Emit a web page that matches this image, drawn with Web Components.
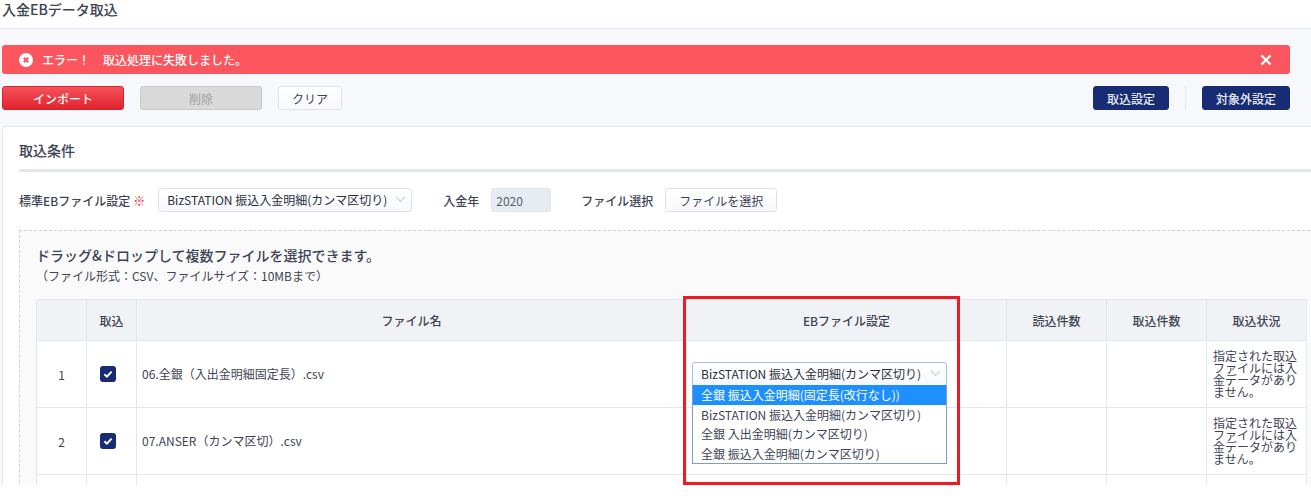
<!DOCTYPE html>
<html lang="ja">
<head>
<meta charset="utf-8">
<title>入金EBデータ取込</title>
<style>
  html, body { margin: 0; background: #fff; }
  body { font-family: "Noto Sans CJK JP", "Noto Sans", sans-serif; font-size: 12px; color: #3d4454; }
</style>
</head>
<body>
<eb-page>
  <eb-header slot="header">入金EBデータ取込</eb-header>
  <eb-alert slot="alert"><b>エラー！</b><b>取込処理に失敗しました。</b></eb-alert>
  <eb-toolbar slot="toolbar">
    <eb-button variant="danger" width="122">インポート</eb-button>
    <eb-button variant="disabled" width="122">削除</eb-button>
    <eb-button width="64">クリア</eb-button>
    <eb-button slot="right" variant="navy" width="76">取込設定</eb-button>
    <eb-button slot="right2" variant="navy" width="88">対象外設定</eb-button>
  </eb-toolbar>
  <eb-card slot="card" heading="取込条件">
    <eb-form-row></eb-form-row>
    <eb-dropzone>
      <eb-file-table></eb-file-table>
    </eb-dropzone>
  </eb-card>
</eb-page>

<script>
const CHEVRON = `<svg width="11" height="7" viewBox="0 0 11 7" fill="none"><path d="M1 1l4.5 4.5L10 1" stroke="#cdd3dd" stroke-width="1.2"/></svg>`;

class EbPage extends HTMLElement {
  constructor() {
    super();
    this.attachShadow({ mode: 'open' });
    this.shadowRoot.innerHTML = /*html*/ `
      <style>
        :host { display: block; position: relative; height: 485px; overflow: hidden; background: #f7f8fb; }
        main { display: flex; flex-direction: column; padding: 16px 0 0 2px; }
        ::slotted([slot="alert"]), ::slotted([slot="toolbar"]) { margin-right: 21px; }
        ::slotted([slot="toolbar"]) { margin-top: 12px; }
        ::slotted([slot="card"]) { margin-top: 16px; margin-right: -20px; }
        /* marca roja sobre la columna de la tabla */
        .mark { position: absolute; left: 683px; top: 296px; width: 271px; height: 183px; border: 3px solid #ed1c24; pointer-events: none; }
      </style>
      <slot name="header"></slot>
      <main>
        <slot name="alert"></slot>
        <slot name="toolbar"></slot>
        <slot name="card"></slot>
      </main>
      <div class="mark"></div>
    `;
  }
}

class EbHeader extends HTMLElement {
  constructor() {
    super();
    this.attachShadow({ mode: 'open' });
    this.shadowRoot.innerHTML = /*html*/ `
      <style>
        :host { display: flex; align-items: center; height: 18px; padding: 0 0 10px 2px; background: #fff; border-bottom: 1px solid #e1e7f1; font-size: 14px; font-weight: 500; color: #3d4454; }
      </style>
      <slot></slot>
    `;
  }
}

class EbAlert extends HTMLElement {
  constructor() {
    super();
    this.attachShadow({ mode: 'open' });
    this.shadowRoot.innerHTML = /*html*/ `
      <style>
        :host { display: flex; align-items: center; height: 29px; padding: 0 18px 0 17px; background: #fb555e; border-radius: 3px; color: #fff; font-size: 12px; }
        svg { flex: none; }
        .msg { display: flex; gap: 13px; margin-left: 9px; flex: 1; }
        ::slotted(b) { font-weight: 500; }
      </style>
      <svg width="14" height="14" viewBox="0 0 14 14"><circle cx="7" cy="7" r="7" fill="#fff"/><path d="M4.8 4.8l4.4 4.4M9.2 4.8L4.8 9.2" stroke="#fb555e" stroke-width="2"/></svg>
      <div class="msg"><slot></slot></div>
      <svg width="12" height="12" viewBox="0 0 12 12"><path d="M1.5 1.5l9 9M10.5 1.5l-9 9" stroke="#fff" stroke-width="2.4"/></svg>
    `;
  }
}

class EbToolbar extends HTMLElement {
  constructor() {
    super();
    this.attachShadow({ mode: 'open' });
    this.shadowRoot.innerHTML = /*html*/ `
      <style>
        :host { display: flex; align-items: center; gap: 16px; }
        .right { margin-left: auto; display: flex; align-items: center; gap: 16px; }
        .sep { width: 1px; height: 24px; background: #e1e7f1; }
      </style>
      <slot></slot>
      <div class="right">
        <slot name="right"></slot>
        <div class="sep"></div>
        <slot name="right2"></slot>
      </div>
    `;
  }
}

class EbButton extends HTMLElement {
  constructor() {
    super();
    this.attachShadow({ mode: 'open' });
  }

  connectedCallback() {
    const width = this.getAttribute('width') || 64;
    this.shadowRoot.innerHTML = /*html*/ `
      <style>
        :host { display: inline-flex; align-items: center; justify-content: center; box-sizing: border-box; width: ${width}px; height: 24px; border-radius: 3px; border: 1px solid #dde2ea; font-size: 12px; }
        :host(:not([variant])) { background: linear-gradient(#fff, #f8f9fb); color: #3d4454; }
        :host([variant="danger"]) { background: linear-gradient(#f4525a, #e2232e); border-color: #d9222c; color: #fff; font-weight: 500; }
        :host([variant="disabled"]) { background: #d9d9d9; border-color: #c9c9c9; color: #aaa; font-weight: 500; }
        :host([variant="navy"]) { background: #182c74; border-color: #182c74; color: #e9ecf5; font-weight: 500; }
      </style>
      <slot></slot>
    `;
  }
}

class EbCard extends HTMLElement {
  constructor() {
    super();
    this.attachShadow({ mode: 'open' });
  }

  connectedCallback() {
    this.shadowRoot.innerHTML = /*html*/ `
      <style>
        :host { display: block; padding: 0 0 0 16px; background: #fff; border: 1px solid #e1e7f1; border-radius: 3px 0 0 0; }
        h2 { margin: 0; height: 39px; display: flex; align-items: center; padding-top: 3px; font-size: 14px; font-weight: 500; color: #3d4454; border-bottom: 3px solid #e3e7ef; }
      </style>
      <h2>${this.getAttribute('heading') || ''}</h2>
      <slot></slot>
    `;
  }
}

class EbSelect extends HTMLElement {
  constructor() {
    super();
    this.attachShadow({ mode: 'open' });
    this.shadowRoot.innerHTML = /*html*/ `
      <style>
        :host { display: flex; align-items: center; justify-content: space-between; box-sizing: border-box; position: relative; height: 24px; padding: 0 5px 1px 8px; background: linear-gradient(#fff, #f6f8fb); border: 1px solid #dfe4ec; border-radius: 3px; color: #2b303c; font-size: 12px; white-space: nowrap; }
        :host([open]) { border-color: #9dbff0; }
        .list { display: none; position: absolute; left: -1px; right: -1px; top: 100%; background: #fff; border: 1px solid #7a9bd6; border-top: 0; box-sizing: border-box; z-index: 2; }
        :host([open]) .list { display: block; }
      </style>
      <span><slot></slot></span>
      ${CHEVRON}
      <div class="list"><slot name="option"></slot></div>
    `;
  }
}

class EbOption extends HTMLElement {
  constructor() {
    super();
    this.attachShadow({ mode: 'open' });
    this.shadowRoot.innerHTML = /*html*/ `
      <style>
        :host { display: flex; align-items: center; height: 19.5px; padding-left: 8px; color: #3d4454; }
        :host([selected]) { background: #1e8fff; color: #fff; }
      </style>
      <slot></slot>
    `;
  }
}

class EbFormRow extends HTMLElement {
  constructor() {
    super();
    this.attachShadow({ mode: 'open' });
    this.shadowRoot.innerHTML = /*html*/ `
      <style>
        :host { display: flex; align-items: center; height: 24px; padding-top: 16px; font-size: 12px; font-weight: 500; color: #3d4454; }
        em { font-style: normal; font-weight: 700; color: #f0222c; margin-left: 3px; }
        eb-select { width: 254px; margin-left: 13px; font-weight: 400; }
        .year { box-sizing: border-box; width: 60px; height: 24px; margin-left: 12px; padding-left: 4px; display: flex; align-items: center; background: #e7ebf2; border: 1px solid #e1e6ee; border-radius: 3px; font-weight: 400; color: #5a6170; }
        .l2 { margin-left: 31px; }
        .l3 { margin-left: 30px; }
        eb-button { margin-left: 12px; font-weight: 400; }
      </style>
      <span>標準EBファイル設定</span><em>※</em>
      <eb-select>BizSTATION 振込入金明細(カンマ区切り)</eb-select>
      <span class="l2">入金年</span>
      <div class="year">2020</div>
      <span class="l3">ファイル選択</span>
      <eb-button width="112">ファイルを選択</eb-button>
    `;
  }
}

class EbDropzone extends HTMLElement {
  constructor() {
    super();
    this.attachShadow({ mode: 'open' });
    this.shadowRoot.innerHTML = /*html*/ `
      <style>
        :host { display: block; margin-top: 18px; padding: 14px 0 0 16px; background: #fafafa; border: 1px dashed #cfd2d8; border-bottom: 0; }
        .t { font-size: 14px; font-weight: 500; line-height: 20px; color: #3d4454; }
        .s { font-size: 12px; line-height: 18px; padding-top: 2px; margin-bottom: 14px; color: #3d4454; }
      </style>
      <div class="t">ドラッグ&amp;ドロップして複数ファイルを選択できます。</div>
      <div class="s">（ファイル形式：CSV、ファイルサイズ：10MBまで）</div>
      <slot></slot>
    `;
  }
}

class EbFileTable extends HTMLElement {
  constructor() {
    super();
    this.attachShadow({ mode: 'open' });
  }

  connectedCallback() {
    const status = '指定された取込ファイルには入金データがありません。';
    const current = 'BizSTATION 振込入金明細(カンマ区切り)';
    const options = ['全銀 振込入金明細(固定長(改行なし))', current, '全銀 入出金明細(カンマ区切り)', '全銀 振込入金明細(カンマ区切り)'];
    const check = `<svg class="chk" width="16" height="16" viewBox="0 0 16 16"><rect width="16" height="16" rx="3" fill="#182c74"/><path d="M4.4 8.2l2.5 2.4 4.7-5" fill="none" stroke="#fff" stroke-width="2"/></svg>`;
    const rows = [
      { no: 1, file: '06.全銀（入出金明細固定長）.csv', open: true },
      { no: 2, file: '07.ANSER（カンマ区切）.csv' },
    ];

    this.shadowRoot.innerHTML = /*html*/ `
      <style>
        :host { display: grid; width: 1271px; grid-template-columns: 50px 50px 550px 320px 100px 100px 100px; grid-template-rows: 41px 67px 67px 67px; border-top: 1px solid #e1e5ec; border-left: 1px solid #e1e7f1; border-radius: 3px 3px 0 0; font-size: 12px; background: #fff; }
        .c { box-sizing: border-box; display: flex; align-items: center; justify-content: center; border-right: 1px solid #e1e7f1; border-bottom: 1px solid #e1e7f1; min-width: 0; color: #3d4454; }
        .h { background: #f1f2f5; font-weight: 500; }
        .file { justify-content: flex-start; padding: 0 0 2px 5px; }
        .st { justify-content: flex-start; padding: 0 6px; line-height: 12px; }
        .sel { justify-content: stretch; padding: 0 59px 0 5px; }
        .sel eb-select { flex: 1; }
        .chk { display: block; margin-right: 8px; }
      </style>
      <div class="c h"></div>
      <div class="c h">取込</div>
      <div class="c h">ファイル名</div>
      <div class="c h">EBファイル設定</div>
      <div class="c h">読込件数</div>
      <div class="c h">取込件数</div>
      <div class="c h">取込状況</div>
      ${rows.map(r => `
        <div class="c">${r.no}</div>
        <div class="c">${check}</div>
        <div class="c file">${r.file}</div>
        <div class="c sel">${r.open ? `
          <eb-select open>${current}
            ${options.map((o, i) => `<eb-option slot="option" ${i === 0 ? 'selected' : ''}>${o}</eb-option>`).join('')}
          </eb-select>` : ''}</div>
        <div class="c"></div>
        <div class="c"></div>
        <div class="c st">${status}</div>
      `).join('')}
      <div class="c"></div><div class="c"></div><div class="c"></div><div class="c"></div><div class="c"></div><div class="c"></div><div class="c"></div>
    `;
  }
}

customElements.define('eb-page', EbPage);
customElements.define('eb-header', EbHeader);
customElements.define('eb-alert', EbAlert);
customElements.define('eb-toolbar', EbToolbar);
customElements.define('eb-button', EbButton);
customElements.define('eb-card', EbCard);
customElements.define('eb-select', EbSelect);
customElements.define('eb-option', EbOption);
customElements.define('eb-form-row', EbFormRow);
customElements.define('eb-dropzone', EbDropzone);
customElements.define('eb-file-table', EbFileTable);
</script>
</body>
</html>
